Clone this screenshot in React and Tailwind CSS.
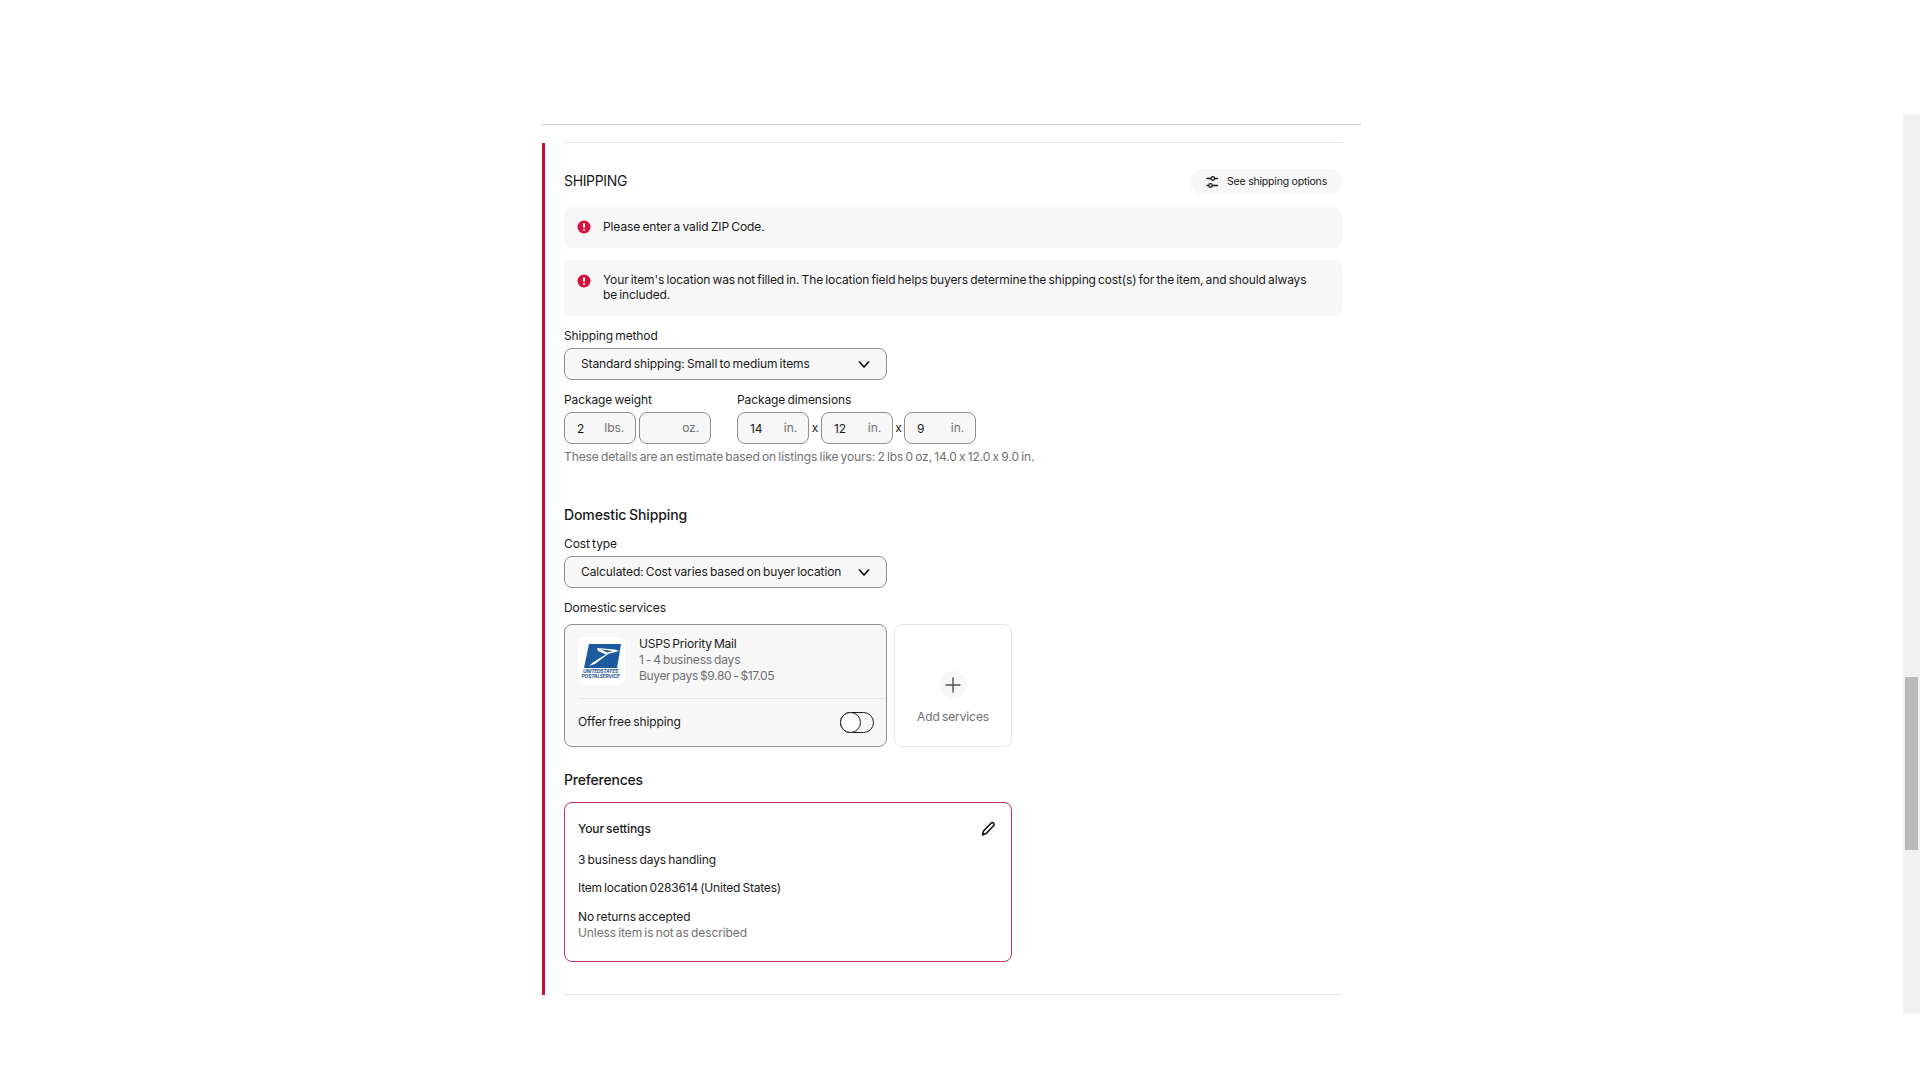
const font = { fontFamily: 'Inter, "Noto Sans", sans-serif' }

function ErrorIcon() {
    return (
        <svg width="14" height="14" viewBox="0 0 14 14" className="shrink-0">
            <circle cx="7" cy="7" r="6.5" fill="#d9103c" />
            <rect x="6" y="3" width="2" height="5" rx="1" fill="#fff" />
            <circle cx="7" cy="10" r="1.1" fill="#fff" />
        </svg>
    )
}

function Chevron() {
    return (
        <svg width="14" height="14" viewBox="0 0 14 14" fill="none" stroke="#191919" strokeWidth="1.8" strokeLinecap="round" strokeLinejoin="round">
            <path d="M2.5 5 7 10l4.5-5" />
        </svg>
    )
}

function SliderIcon() {
    return (
        <svg width="14" height="14" viewBox="0 0 14 14" fill="none" stroke="#191919" strokeWidth="1.3" strokeLinecap="round">
            <path d="M2 3.5h3.5M10 3.5h2.5M2 10.5h1.5M7.5 10.5h5" />
            <circle cx="7.8" cy="3.5" r="1.8" />
            <circle cx="5.5" cy="10.5" r="1.8" />
        </svg>
    )
}

function UspsLogo() {
    return (
        <div className="w-12 h-12 rounded-lg bg-white flex flex-col items-center justify-center shrink-0">
            <svg width="38" height="24" viewBox="0 0 38 24">
                <path d="M6 0h32l-4 24H1z" fill="#1c5a9f" />
                <path d="M14 4 32 5.5 36 7 25 10 12 20 6 22C11 17 17 14 23 10.5L15 7z" fill="#fff" />
                <path d="M18 5.5 30 7 24 8.5z" fill="#1c5a9f" />
            </svg>
            <div className="text-[5px] leading-[5px] mt-[1px] italic font-bold tracking-[-0.25px] text-[#2c5a96] text-center -ml-[3px]">
                UNITED STATES<br />POSTAL SERVICE
            </div>
        </div>
    )
}

function Select({ value }) {
    return (
        <div className="mt-[4px] w-[323px] h-[32px] rounded-lg border border-[#8f8f8f] bg-[#f7f7f7] flex items-center justify-between pl-[16px] pr-[15px] text-[12px] text-[#191919]">
            <span>{value}</span>
            <Chevron />
        </div>
    )
}

function UnitInput({ value, unit }) {
    return (
        <div className="w-[72px] h-[32px] rounded-lg border border-[#8f8f8f] bg-[#f7f7f7] flex items-center justify-between pl-[12px] pr-[11px] text-[12px]">
            <span className="text-[#191919] pt-px">{value}</span>
            <span className="text-[#707070] pb-px">{unit}</span>
        </div>
    )
}

export default function App() {
    return (
        <div className="bg-white min-h-screen flex text-[#191919] tracking-[-0.1px] [word-spacing:-1px]" style={font}>
            <main className="flex-1 pl-[542px] pt-[124px]">
                <div className="w-[819px] h-px bg-[#cccccc] mb-[17px]"></div>
                <div className="w-[778px] h-px bg-[#e5e5e5] ml-[22px]"></div>

                <section className="w-[800px] border-l-[3px] border-[#c8103c] pl-[19px]">
                    <div className="border-b border-[#e5e5e5] pt-[26px] pb-[32px]">

                        {/* header */}
                        <div className="flex items-center justify-between h-[25px]">
                            <h2 className="text-[14px] -mt-[2px] tracking-[-0.35px]">SHIPPING</h2>
                            <button className="w-[152px] h-[25px] rounded-full bg-[#f7f7f7] flex items-center pl-[15px] gap-[8px] text-[10.5px] tracking-[-0.2px]">
                                <SliderIcon />
                                See shipping options
                            </button>
                        </div>

                        {/* errors */}
                        <div className="mt-[13px] h-[41px] rounded-lg bg-[#f7f7f7] flex items-center pl-[13px] gap-[12px] text-[12px]">
                            <div className="-mt-[2px]"><ErrorIcon /></div>
                            <span className="-mt-[1px]">Please enter a valid ZIP Code.</span>
                        </div>
                        <div className="mt-[12px] h-[56px] rounded-lg bg-[#f7f7f7] flex pl-[13px] pr-[30px] pt-[13px] gap-[12px] text-[12px] leading-[15px] tracking-[-0.13px]">
                            <div className="pt-px"><ErrorIcon /></div>
                            <span className="-mt-px">Your item's location was not filled in. The location field helps buyers determine the shipping cost(s) for the item, and should always be included.</span>
                        </div>

                        {/* shipping method */}
                        <label className="block mt-[12px] text-[12px] leading-[16px]">Shipping method</label>
                        <Select value="Standard shipping: Small to medium items" />

                        <div className="flex mt-[12px] gap-[26px]">
                            <div>
                                <label className="block text-[12px] leading-[16px]">Package weight</label>
                                <div className="flex gap-[3px] mt-[4px]">
                                    <UnitInput value="2" unit="lbs." />
                                    <UnitInput value="" unit="oz." />
                                </div>
                            </div>
                            <div>
                                <label className="block text-[12px] leading-[16px]">Package dimensions</label>
                                <div className="flex items-center mt-[4px] text-[12px]">
                                    <UnitInput value="14" unit="in." />
                                    <span className="w-[12px] text-center">x</span>
                                    <UnitInput value="12" unit="in." />
                                    <span className="w-[11px] text-center">x</span>
                                    <UnitInput value="9" unit="in." />
                                </div>
                            </div>
                        </div>
                        <p className="mt-[5px] text-[12px] leading-[16px] text-[#707070]">
                            These details are an estimate based on listings like yours: 2 lbs 0 oz, 14.0 x 12.0 x 9.0 in.
                        </p>

                        {/* domestic */}
                        <h3 className="mt-[40px] text-[14px] leading-[20px] font-medium">Domestic Shipping</h3>
                        <label className="block mt-[11px] text-[12px] leading-[16px]">Cost type</label>
                        <Select value="Calculated: Cost varies based on buyer location" />

                        <label className="block mt-[12px] text-[12px] leading-[16px]">Domestic services</label>
                        <div className="flex gap-[7px] mt-[8px]">
                            <div className="w-[323px] h-[123px] rounded-lg border border-[#8f8f8f] bg-[#f7f7f7] pl-[13px] pt-[12px]">
                                <div className="flex gap-[13px]">
                                    <UspsLogo />
                                    <div className="text-[12px] leading-[16px] -mt-[1px] tracking-[-0.2px]">
                                        <div>USPS Priority Mail</div>
                                        <div className="text-[#707070]">1 - 4 business days</div>
                                        <div className="text-[#707070] tracking-[-0.35px]">Buyer pays $9.80 - $17.05</div>
                                    </div>
                                </div>
                                <div className="h-px bg-[#e5e5e5] mt-[13px]"></div>
                                <div className="flex items-center justify-between pr-[12px] pt-[12px] text-[12px]">
                                    <span>Offer free shipping</span>
                                    <div className="w-[34px] h-[21px] rounded-full border border-[#191919] flex mt-px">
                                        <div className="w-[21px] h-[21px] -m-px rounded-full border border-[#191919] bg-white"></div>
                                    </div>
                                </div>
                            </div>
                            <div className="w-[118px] h-[123px] rounded-lg border border-[#e5e5e5] flex flex-col items-center pt-[47px]">
                                <div className="w-[28px] h-[28px] rounded-full bg-[#f7f7f7] flex items-center justify-center -mt-px">
                                    <svg width="16" height="16" viewBox="0 0 16 16" stroke="#505050" strokeWidth="1.4" strokeLinecap="round">
                                        <path d="M8 1v14M1 8h14" />
                                    </svg>
                                </div>
                                <span className="mt-[10px] text-[12px] leading-[16px] text-[#707070]">Add services</span>
                            </div>
                        </div>

                        {/* preferences */}
                        <h3 className="mt-[23px] text-[14px] leading-[20px] font-medium tracking-[-0.2px]">Preferences</h3>
                        <div className="mt-[12px] w-[448px] h-[160px] rounded-lg border border-[#c5305d] pl-[13px] pr-[15px] pt-[18px] text-[12px] leading-[16px]">
                            <div className="flex items-center justify-between">
                                <span className="font-medium">Your settings</span>
                                <svg width="16" height="16" viewBox="0 0 16 16" fill="none" stroke="#191919" strokeWidth="1.6" strokeLinejoin="round">
                                    <path d="M11 2.2c.8-.8 2-.7 2.6 0 .7.7.7 1.8 0 2.5L6 12.6 2.6 14l.8-3.9z" />
                                </svg>
                            </div>
                            <p className="mt-[15px]">3 business days handling</p>
                            <p className="mt-[12px] tracking-[-0.2px]">Item location 0283614 (United States)</p>
                            <p className="mt-[13px]">No returns accepted</p>
                            <p className="text-[#707070]">Unless item is not as described</p>
                        </div>
                    </div>
                </section>
            </main>

            {/* scrollbar */}
            <div className="w-[17px] h-[900px] mt-[114px] bg-[#f1f1f1] pt-[563px] pl-[2px]">
                <div className="w-[13px] h-[173px] bg-[#bababa]"></div>
            </div>
        </div>
    )
}
